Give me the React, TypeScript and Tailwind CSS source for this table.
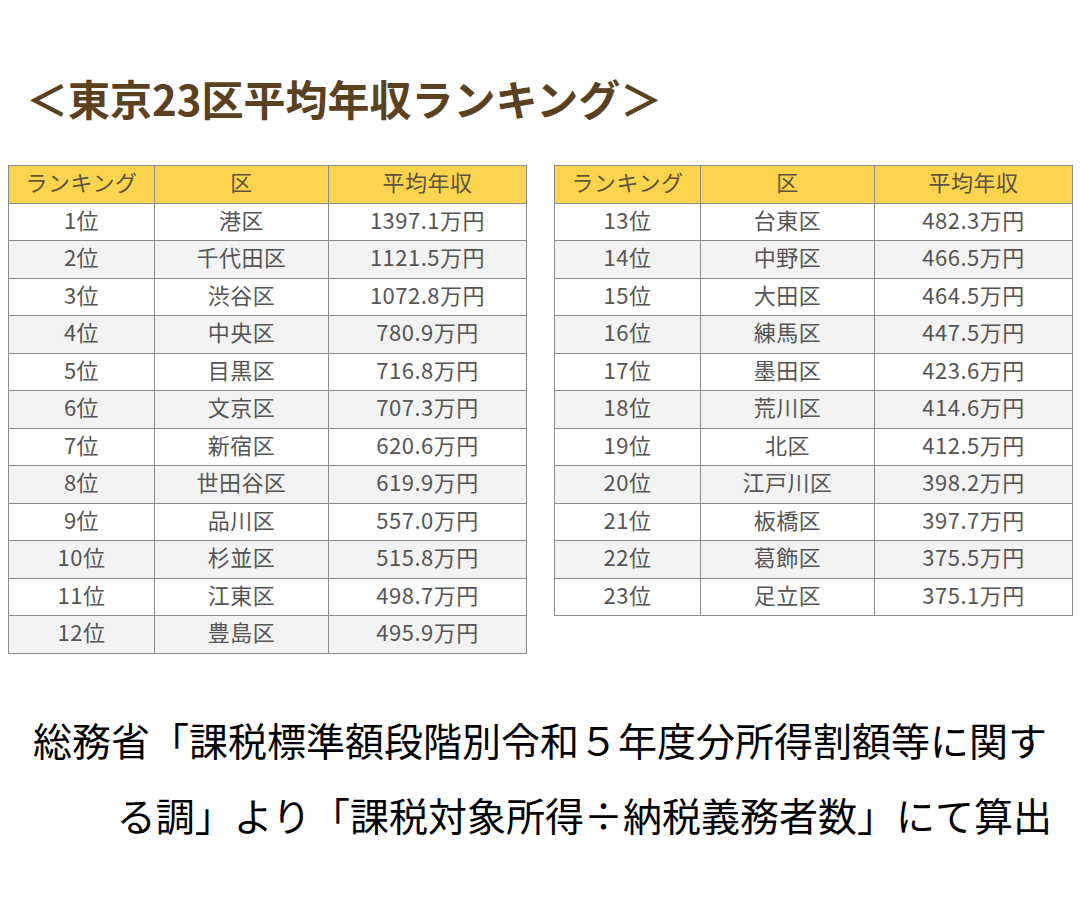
import React from "react";

// left and right halves of the 23-ward ranking
const LEFT = [
  ["1位", "港区", "1397.1万円"],
  ["2位", "千代田区", "1121.5万円"],
  ["3位", "渋谷区", "1072.8万円"],
  ["4位", "中央区", "780.9万円"],
  ["5位", "目黒区", "716.8万円"],
  ["6位", "文京区", "707.3万円"],
  ["7位", "新宿区", "620.6万円"],
  ["8位", "世田谷区", "619.9万円"],
  ["9位", "品川区", "557.0万円"],
  ["10位", "杉並区", "515.8万円"],
  ["11位", "江東区", "498.7万円"],
  ["12位", "豊島区", "495.9万円"],
];

const RIGHT = [
  ["13位", "台東区", "482.3万円"],
  ["14位", "中野区", "466.5万円"],
  ["15位", "大田区", "464.5万円"],
  ["16位", "練馬区", "447.5万円"],
  ["17位", "墨田区", "423.6万円"],
  ["18位", "荒川区", "414.6万円"],
  ["19位", "北区", "412.5万円"],
  ["20位", "江戸川区", "398.2万円"],
  ["21位", "板橋区", "397.7万円"],
  ["22位", "葛飾区", "375.5万円"],
  ["23位", "足立区", "375.1万円"],
];

function RankTable({ rows }: { rows: string[][] }) {
  return (
    <table className="border-collapse table-fixed w-[518px] text-[22px] tracking-[0.5px] leading-none">
      <colgroup>
        <col className="w-[146px]" />
        <col className="w-[174px]" />
        <col className="w-[198px]" />
      </colgroup>
      <thead>
        <tr className="h-[37.5px] bg-[#fdd44e] text-[#5f5240]">
          <th className="border border-[#8c8c8c] font-normal pb-[6px]">ランキング</th>
          <th className="border border-[#8c8c8c] font-normal pb-[6px]">区</th>
          <th className="border border-[#8c8c8c] font-normal pb-[6px]">平均年収</th>
        </tr>
      </thead>
      <tbody className="text-[#555555]">
        {rows.map((r, i) => (
          <tr key={r[0]} className={"h-[37.5px] " + (i % 2 === 1 ? "bg-[#f3f3f3]" : "bg-white")}>
            <td className="border border-[#8c8c8c] text-center pb-[6px]">{r[0]}</td>
            <td className="border border-[#8c8c8c] text-center pb-[6px]">{r[1]}</td>
            <td className="border border-[#8c8c8c] text-center pb-[6px]">{r[2]}</td>
          </tr>
        ))}
      </tbody>
    </table>
  );
}

export default function App() {
  return (
    <div
      className="w-[1080px] h-[899px] bg-white overflow-hidden"
      style={{ fontFamily: '"Noto Sans CJK JP", "Noto Sans", sans-serif' }}
    >
      {/* Title */}
      <div className="pt-[77px] pl-[26px] text-[42px] leading-none font-bold text-[#5a4120]">
        ＜東京23区平均年収ランキング＞
      </div>

      {/* Tables */}
      <div className="mt-[46px] pl-[8px] flex items-start gap-[27px]">
        <RankTable rows={LEFT} />
        <RankTable rows={RIGHT} />
      </div>

      {/* Source note */}
      <div className="mt-[48px] text-[39px] leading-[75px] text-black">
        <div className="pl-[33px]">総務省「課税標準額段階別令和５年度分所得割額等に関す</div>
        <div className="text-right pr-[28px]">る調」より「課税対象所得÷納税義務者数」にて算出</div>
      </div>
    </div>
  );
}
